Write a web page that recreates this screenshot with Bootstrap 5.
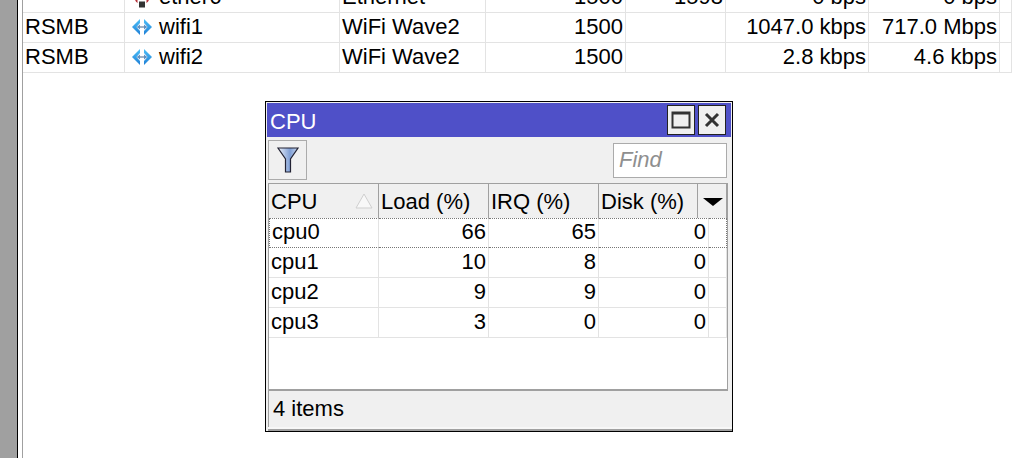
<!DOCTYPE html>
<html lang="en">
<head>
<meta charset="utf-8">
<title>CPU</title>
<link href="https://cdn.jsdelivr.net/npm/bootstrap@5.3.0/dist/css/bootstrap.min.css" rel="stylesheet">
<style>
html,body{height:100%;margin:0}
body{font-family:"Liberation Sans",Arial,sans-serif;font-size:22px;line-height:1;color:#000;background:#fff;overflow:hidden}
.desk{height:458px;position:relative;overflow:hidden}
.rail{width:17px;background:#a0a0a0;flex:none}
.railedge{width:6px;flex:none;background:#fff;border-left:1px solid #000;border-right:1px solid #a0a0a0}
.listwrap{flex:1;min-width:0;margin-top:-17px}
table.grid{table-layout:fixed;border-collapse:separate;border-spacing:0;margin:0;width:100%;--bs-table-bg:transparent;--bs-table-border-color:#e3e3e3}
table.grid td,table.grid th{height:30px;padding:0 2px 1px;border:0;border-right:1px solid #e3e3e3;border-bottom:1px solid #e3e3e3;font-weight:400;line-height:1;white-space:nowrap;vertical-align:middle;overflow:hidden;color:#000;box-shadow:none}
.ifname{display:flex;align-items:center;gap:7px;padding-left:5px}
.win{position:absolute;left:265px;top:101px;width:468px;height:331px;background:#f0f0f0;border:1px solid #000;display:flex;flex-direction:column;padding:1px 1px 0}
.wintitle{height:34px;background:#4f50c8;color:#fff;flex:none;padding:0 5px 0 3px}
.wintitle>span{padding-top:3px}
.wbtn{width:28px;height:30px;padding:0;background:#f0f0f0;border:1px solid #222;border-radius:0;display:flex;align-items:center;justify-content:center}
.wingap{gap:3px}
.wintool{height:46px;flex:none;padding:3px 4px 3px 1px}
.filterbtn{width:39px;height:40px;padding:0;background:#f0f0f0;border:1px solid #ababab;border-radius:0;display:flex;align-items:center;justify-content:center}
input.findbox{width:114px;height:35px;padding:0 5px;border:1px solid #ababab;border-radius:0;font-size:22px;font-style:italic;line-height:1;background:#fff;font-family:inherit;box-shadow:none}
input.findbox::placeholder{color:#8f8f8f;opacity:1}
.gridbox{flex:1;min-height:0;background:#fff;margin-left:1px;margin-right:3px;border-right:1px solid #a0a0a0;border-left:1px solid #a0a0a0;border-bottom:2px solid #a0a0a0}
.gridbox table.grid th{height:35px;background:#f0f0f0;border-top:1px solid #a0a0a0;border-right:1px solid #a0a0a0;border-bottom:0;padding:1px 2px 0;position:relative}
.gridbox table.grid tr.focused td{border-top:1px dotted #777;border-bottom:1px dotted #777;padding-bottom:2px}
.gridbox table.grid tr.focused td:first-child{border-left:1px dotted #777}
.gridbox table.grid tr.focused td:last-child{border-right:1px dotted #777}
.sorttri{position:absolute;right:5px;top:9px}
.menutri{position:absolute;left:5px;top:14px}
.winstatus{height:36px;flex:none;margin-left:1px;padding:0 4px;border-left:1px solid #a0a0a0;display:flex;align-items:center}
.winfoot{height:4px;flex:none;margin-left:1px;margin-right:-1px;background:#f7f7f7;border-bottom:2px solid #a0a0a0}
</style>
</head>
<body>
<svg width="0" height="0" class="position-absolute">
  <defs>
    <linearGradient id="wv" x1="0" x2="0" y1="0" y2="1"><stop offset="0" stop-color="#4cc0f8"/><stop offset="1" stop-color="#1f7fd6"/></linearGradient>
    <linearGradient id="fg" x1="0" x2="1" y1="0" y2="0"><stop offset="0" stop-color="#eef2fa"/><stop offset=".6" stop-color="#7f9fd6"/><stop offset="1" stop-color="#c6d4ec"/></linearGradient>
    <symbol id="wave" viewBox="0 0 20 16">
      <path d="M0 8 8 0V4L4.500 8 8 12V16Z" fill="url(#wv)"/>
      <path d="M20 8 12 0V4L15.500 8 12 12V16Z" fill="url(#wv)"/>
      <path d="M5.500 8H14.500" stroke="#5f7f9f" stroke-width="1.200" fill="none"/>
      <path d="M5 8 8 5.500V10.500ZM15 8 12 5.500V10.500Z" fill="#5f8fc0"/>
    </symbol>
  </defs>
</svg>
<div class="desk d-flex">
  <div class="rail"></div>
  <div class="railedge"></div>
  <div class="listwrap">
    <table class="table grid">
      <colgroup><col style="width:102px"><col style="width:215px"><col style="width:146px"><col style="width:140px"><col style="width:100px"><col style="width:143px"><col style="width:131px"><col></colgroup>
      <tbody>
        <tr><td></td><td><div class="ifname"><svg width="20" height="22" viewBox="0 0 20 22"><circle cx="10" cy="11" r="7.500" fill="#b5323a"/><rect x="5.500" y="14" width="9" height="8" fill="#fff"/><rect x="7" y="15.500" width="6" height="6" fill="#333"/></svg><span>ether6</span></div></td><td>Ethernet</td><td class="text-end">1500</td><td class="text-end">1598</td><td class="text-end">0 bps</td><td class="text-end">0 bps</td><td></td></tr>
        <tr><td>RSMB</td><td><div class="ifname"><svg width="20" height="16"><use href="#wave"/></svg><span>wifi1</span></div></td><td>WiFi Wave2</td><td class="text-end">1500</td><td></td><td class="text-end">1047.0 kbps</td><td class="text-end">717.0 Mbps</td><td></td></tr>
        <tr><td>RSMB</td><td><div class="ifname"><svg width="20" height="16"><use href="#wave"/></svg><span>wifi2</span></div></td><td>WiFi Wave2</td><td class="text-end">1500</td><td></td><td class="text-end">2.8 kbps</td><td class="text-end">4.6 kbps</td><td></td></tr>
      </tbody>
    </table>
  </div>

  <div class="win">
    <div class="wintitle d-flex align-items-center justify-content-between">
      <span>CPU</span>
      <div class="d-flex wingap">
        <button type="button" class="btn wbtn" aria-label="Maximize"><svg width="20" height="20" viewBox="0 0 20 20"><rect x="1.500" y="2.500" width="17" height="15" fill="none" stroke="#333" stroke-width="2"/><path d="M1 3.500H19" stroke="#333" stroke-width="2"/></svg></button>
        <button type="button" class="btn wbtn" aria-label="Close"><svg width="18" height="18" viewBox="0 0 18 18"><path d="M3 3 15 15M15 3 3 15" stroke="#333" stroke-width="3"/></svg></button>
      </div>
    </div>
    <div class="wintool d-flex align-items-center justify-content-between">
      <button type="button" class="btn filterbtn" aria-label="Filter"><svg width="24" height="26" viewBox="0 0 24 26"><path d="M2 1H22L14.500 12V25H9.500V12Z" fill="url(#fg)" stroke="#223" stroke-width="1.200"/></svg></button>
      <input class="form-control findbox" type="text" placeholder="Find" aria-label="Find">
    </div>
    <div class="gridbox">
      <table class="table grid">
        <colgroup><col style="width:110px"><col style="width:110px"><col style="width:110px"><col style="width:99px"><col style="width:11px"><col></colgroup>
        <thead>
          <tr><th>CPU<svg class="sorttri" width="18" height="16" viewBox="0 0 18 16"><path d="M9 1 17 15H1Z" fill="#f8f8f8" stroke="#cfcfcf"/></svg></th><th>Load (%)</th><th>IRQ (%)</th><th>Disk (%)</th><th colspan="2"><svg class="menutri" width="20" height="8" viewBox="0 0 20 8"><path d="M0 0H20L10 8Z" fill="#000"/></svg></th></tr>
        </thead>
        <tbody>
          <tr class="focused"><td>cpu0</td><td class="text-end">66</td><td class="text-end">65</td><td class="text-end" colspan="2">0</td><td></td></tr>
          <tr><td>cpu1</td><td class="text-end">10</td><td class="text-end">8</td><td class="text-end" colspan="2">0</td><td></td></tr>
          <tr><td>cpu2</td><td class="text-end">9</td><td class="text-end">9</td><td class="text-end" colspan="2">0</td><td></td></tr>
          <tr><td>cpu3</td><td class="text-end">3</td><td class="text-end">0</td><td class="text-end" colspan="2">0</td><td></td></tr>
        </tbody>
      </table>
    </div>
    <div class="winstatus">4 items</div>
    <div class="winfoot"></div>
  </div>
</div>
</body>
</html>
